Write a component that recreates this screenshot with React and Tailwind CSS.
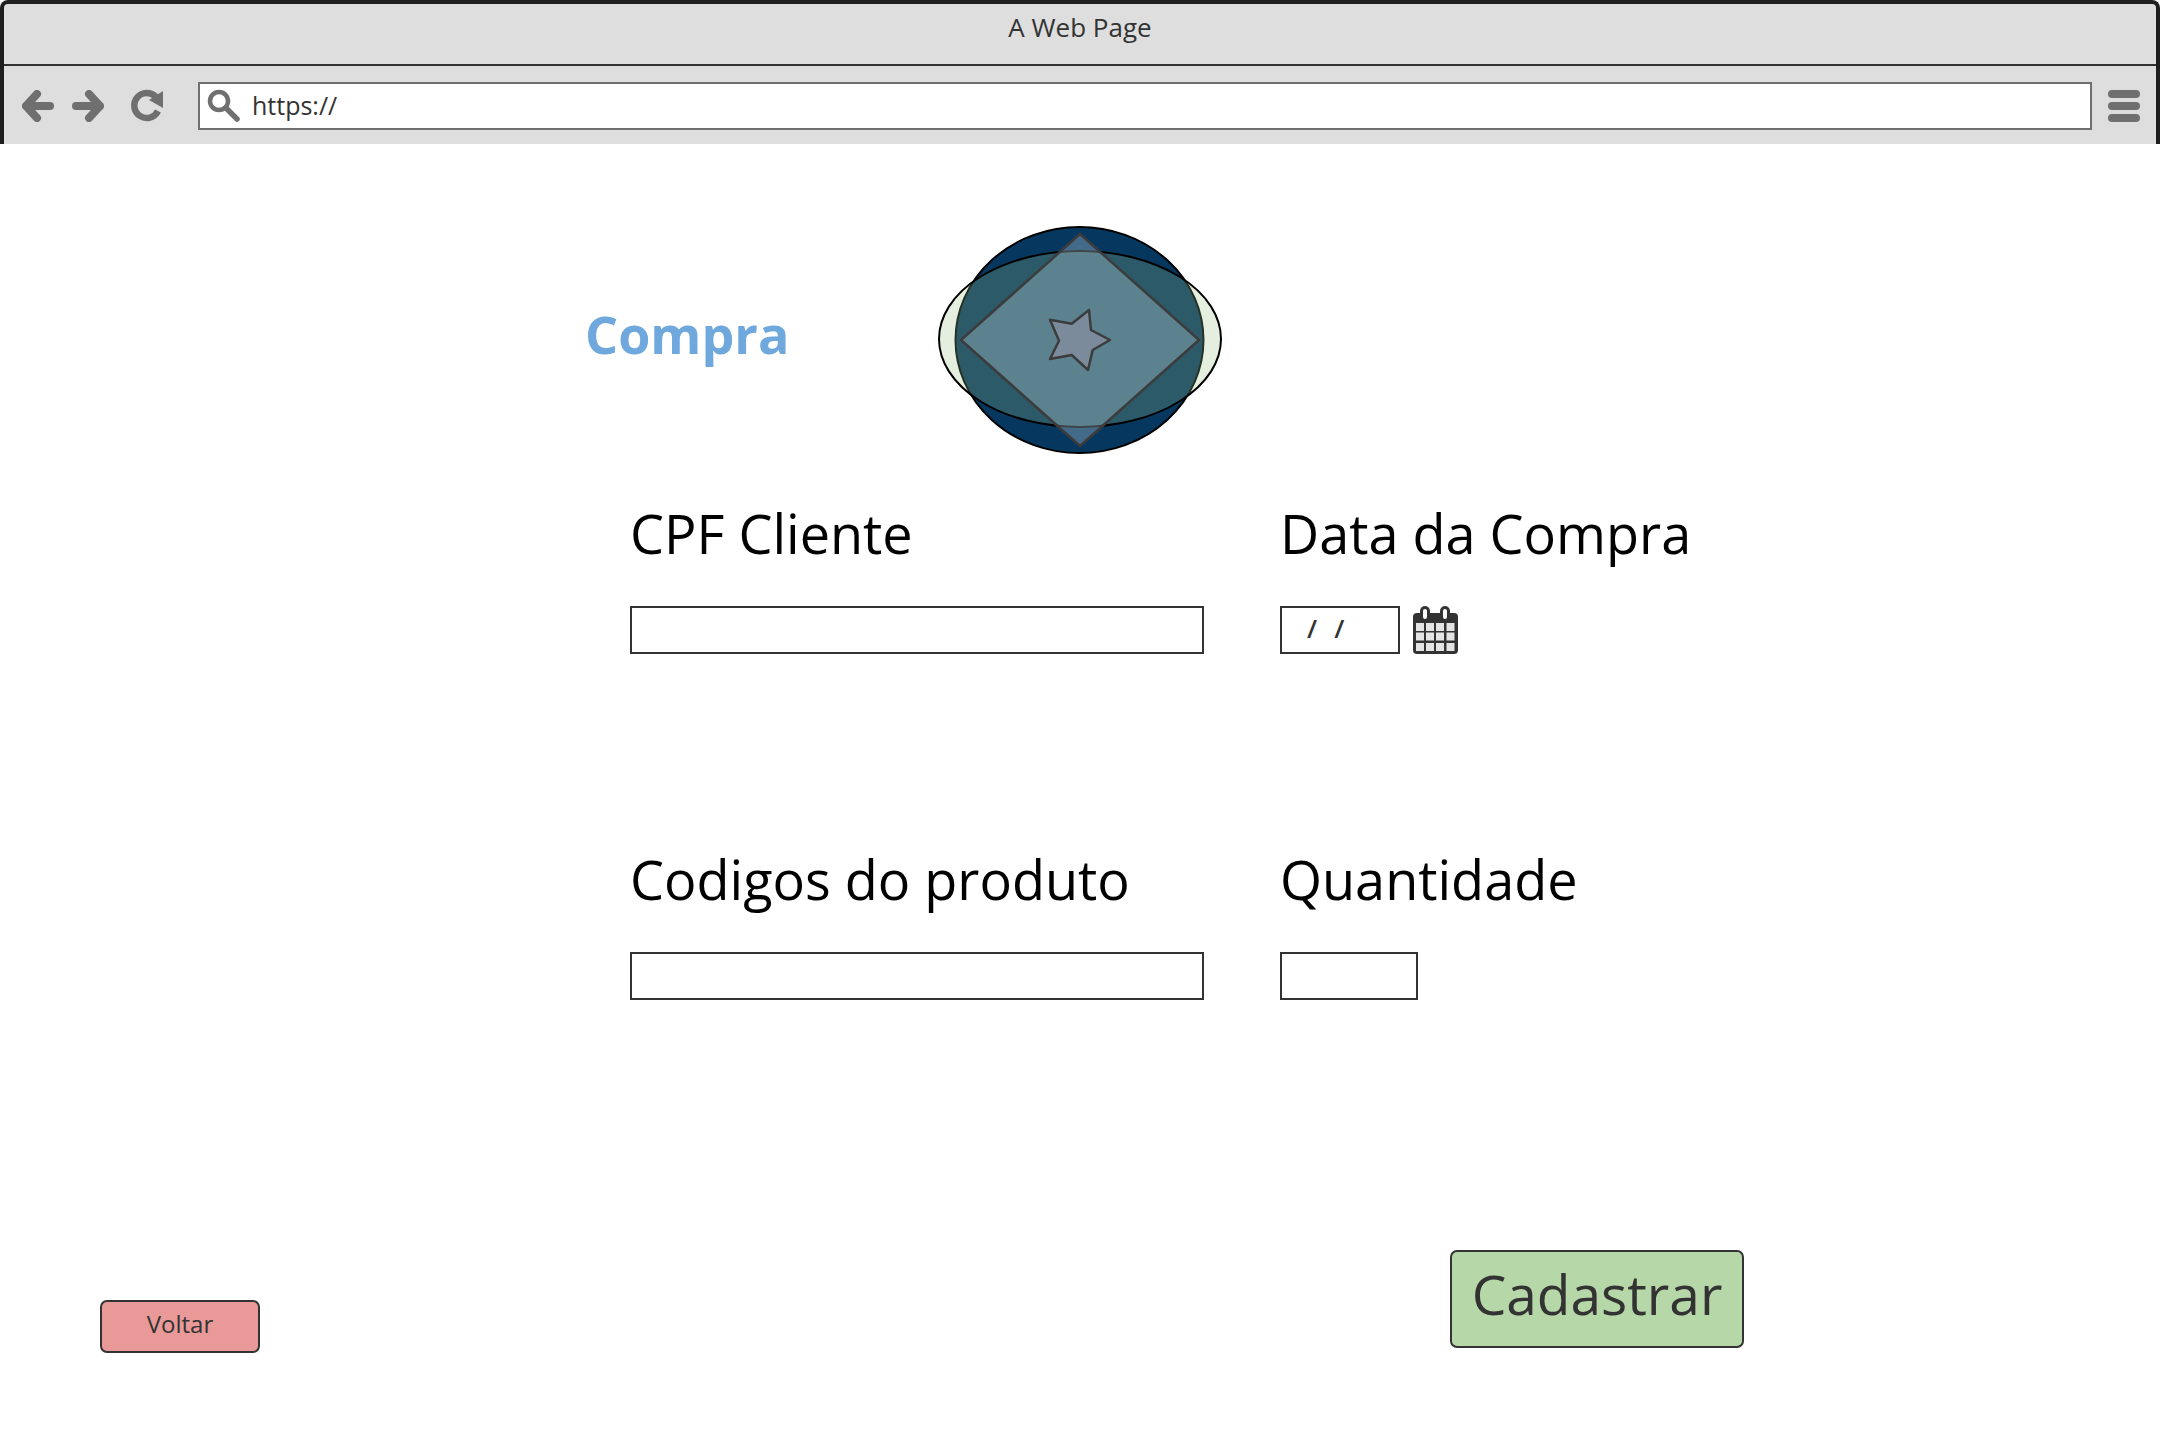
const font = "font-['Open_Sans','Noto_Sans',sans-serif]"

function NavArrow({ flip }) {
  return (
    <svg width="32" height="32" viewBox="0 0 32 32" className={flip ? 'rotate-180' : ''}>
      <path d="M28 16H4M15 4 4 16l11 12" fill="none" stroke="#6f6f6f" strokeWidth="8" strokeLinecap="round" strokeLinejoin="round" />
    </svg>
  )
}

function Reload() {
  return (
    <svg width="34" height="34" viewBox="0 0 34 34">
      <path d="M28 22a12.500 12.500 0 1 1-2-14" fill="none" stroke="#6f6f6f" strokeWidth="6.500" />
      <path d="M33 2v17l-14-8z" fill="#6f6f6f" />
    </svg>
  )
}

function SearchIcon() {
  return (
    <svg width="34" height="34" viewBox="0 0 34 34">
      <circle cx="12" cy="12" r="9" fill="none" stroke="#6f6f6f" strokeWidth="4.500" />
      <path d="M19 19 30 30" stroke="#6f6f6f" strokeWidth="5.500" strokeLinecap="round" />
    </svg>
  )
}

function Calendar() {
  const cols = [3, 13, 23, 33.500]
  const rows = [17, 26.500, 37]
  return (
    <svg width="45" height="48" viewBox="0 0 45 48" className="ml-[13px]">
      <rect x="0" y="7" width="45" height="41" rx="4" fill="#333" />
      <rect x="7" y="0" width="10" height="15" rx="5" fill="#333" />
      <rect x="27" y="0" width="10" height="15" rx="5" fill="#333" />
      <rect x="10" y="3" width="4" height="10" rx="2" fill="#fff" />
      <rect x="30" y="3" width="4" height="10" rx="2" fill="#fff" />
      {rows.map((y) =>
        cols.map((x) => <rect key={`${x}-${y}`} x={x} y={y} width="8" height="8" fill="#e4e4e4" />),
      )}
    </svg>
  )
}

function Logo() {
  return (
    <svg width="288" height="232" viewBox="936 224 288 232">
      <ellipse cx="1079.500" cy="340" rx="124" ry="113" fill="#06375f" stroke="#000" strokeWidth="2" />
      <ellipse cx="1080" cy="339" rx="141" ry="88" fill="rgb(154,192,130)" fillOpacity="0.257" stroke="#000" strokeWidth="2" />
      <path d="M1080 234 1199 340 1080 446 961 340Z" fill="#c8d7e3" fillOpacity="0.32" stroke="#3c3c3c" strokeWidth="2.500" />
      <path
        d="M1110 340 1092.700 350 1088 370 1071.700 355 1050 359 1059 340.700 1050 319.700 1071.700 323.700 1089 310 1091 330Z"
        fill="#7b8b9c"
        stroke="#3c3c3c"
        strokeWidth="2.500"
        strokeLinejoin="round"
      />
    </svg>
  )
}

function Field({ label, children }) {
  return (
    <div>
      <div className="h-[60px] mb-[41px] pb-[5px] flex items-center text-[54px] leading-none font-medium text-black whitespace-nowrap">{label}</div>
      {children}
    </div>
  )
}

export default function App() {
  return (
    <div className={`w-[2160px] h-[1440px] bg-white flex flex-col ${font}`}>
      <header className="h-[144px] shrink-0 bg-[#dedede] border-t-[4px] border-x-[4px] border-[#1f1f1f] rounded-t-[8px]">
        <div className="h-[62px] border-b-[2px] border-[#333] flex items-center justify-center text-[26px] text-[#333] pb-[13px]">
          A Web Page
        </div>
        <div className="flex items-center h-[74px] pl-[18px] pr-[16px] pt-[6px]">
          <NavArrow />
          <div className="ml-[18px]"><NavArrow flip /></div>
          <div className="ml-[26px]"><Reload /></div>
          <div className="ml-[34px] flex-1 h-[48px] bg-white border-[2px] border-[#6f6f6f] flex items-center pl-[7px]">
            <SearchIcon />
            <span className="ml-[11px] text-[25px] text-[#333]">https://</span>
          </div>
          <div className="ml-[16px] w-[32px] flex flex-col gap-[4px]">
            <div className="h-[8px] rounded-full bg-[#6f6f6f]" />
            <div className="h-[8px] rounded-full bg-[#6f6f6f]" />
            <div className="h-[8px] rounded-full bg-[#6f6f6f]" />
          </div>
        </div>
      </header>

      <main className="flex-1 flex flex-col">
        <section className="flex items-center pt-[80px] pl-[585px]">
          <h1 className="w-[351px] pb-[12px] text-[52px] font-bold text-[#6fa8dc] leading-none">Compra</h1>
          <Logo />
        </section>

        <section className="grid grid-cols-[574px_auto] gap-x-[76px] gap-y-[197px] ml-[630px] mt-[49px] justify-start">
          <Field label="CPF Cliente">
            <div className="h-[48px] border-[2px] border-[#333] bg-white" />
          </Field>
          <Field label="Data da Compra">
            <div className="flex items-center">
              <div className="w-[120px] h-[48px] border-[2px] border-[#333] bg-white flex items-center pl-[25px] pb-[3px] gap-[17px] text-[26px] font-semibold text-[#333]">
                <span>/</span>
                <span>/</span>
              </div>
              <Calendar />
            </div>
          </Field>
          <Field label="Codigos do produto">
            <div className="h-[48px] border-[2px] border-[#333] bg-white" />
          </Field>
          <Field label="Quantidade">
            <div className="w-[138px] h-[48px] border-[2px] border-[#333] bg-white" />
          </Field>
        </section>

        <footer className="flex items-start mt-[250px] pl-[100px]">
          <button className="mt-[50px] w-[160px] h-[53px] rounded-[7px] border-[2px] border-[#333] bg-[#ea9999] text-[24px] text-[#333] pb-[5px]">
            Voltar
          </button>
          <button className="ml-[1190px] w-[294px] h-[98px] rounded-[7px] border-[2px] border-[#333] bg-[#b6d7a8] text-[55px] font-medium text-[#333] pb-[9px]">
            Cadastrar
          </button>
        </footer>
      </main>
    </div>
  )
}
